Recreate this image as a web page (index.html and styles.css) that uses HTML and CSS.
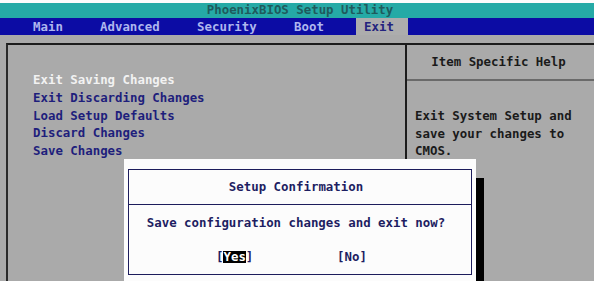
FILE: index.html
```html
<!DOCTYPE html>
<html lang="en">
<head>
<meta charset="UTF-8">
<meta name="viewport" content="width=device-width, initial-scale=1.0">
<title>PhoenixBIOS Setup Utility</title>
<link rel="stylesheet" href="styles.css">
</head>
<body>
<div class="screen">
  <div class="topgap"></div>
  <div class="titlebar">PhoenixBIOS Setup Utility</div>
  <div class="menubar">
    <span class="tab tab-main">Main</span>
    <span class="tab tab-adv">Advanced</span>
    <span class="tab tab-sec">Security</span>
    <span class="tab tab-boot">Boot</span>
    <span class="tab tab-exit">Exit</span>
  </div>
  <div class="frame">
    <ul class="items">
      <li class="current">Exit Saving Changes</li>
      <li>Exit Discarding Changes</li>
      <li>Load Setup Defaults</li>
      <li>Discard Changes</li>
      <li>Save Changes</li>
    </ul>
    <div class="help">
      <div class="help-title">Item Specific Help</div>
      <div class="help-text">Exit System Setup and<br>save your changes to<br>CMOS.</div>
    </div>
  </div>

  <!-- confirmation popup over the menu -->
  <div class="dialog">
    <div class="dialog-inner">
      <div class="dialog-title">Setup Confirmation</div>
      <div class="dialog-body">
        <p class="question">Save configuration changes and exit now?</p>
        <div class="choices">
          <span class="choice">[<span class="sel">Yes</span>]</span>
          <span class="choice">[No]</span>
        </div>
      </div>
    </div>
  </div>
</div>
</body>
</html>
```

FILE: styles.css
```css
body {
  margin: 0;
  padding: 0;
  background-color: #aaaaaa;
  font-family: "DejaVu Sans Mono", "Liberation Mono", monospace;
  font-size: 12.4px;
  font-weight: bold;
}
.screen {
  position: relative;
  width: 594px;
  height: 281px;
  overflow: hidden;
  background-color: #aaaaaa;
}
.topgap {
  height: 3px;
  background: #fbfbfb;
}
.titlebar {
  height: 15px;
  line-height: 14px;
  background-color: #25aaa6;
  color: #1f5a5c;
  text-align: center;
  padding-left: 6px;
}
.menubar {
  display: flex;
  height: 17px;
  background-color: #0c0ca4;
}
.tab {
  line-height: 17px;
  color: #aeb6ee;
}
.tab-main {
  margin-left: 33px;
  width: 67px;
}
.tab-adv,
.tab-sec {
  width: 97px;
}
.tab-boot {
  width: 62px;
}
.tab-exit {
  width: 44px;
  padding-left: 8px;
  background-color: #adadad;
  color: #23237e;
}
.frame {
  display: flex;
  margin: 8px 0 0 6px;
  height: 240px;
  border-top: 2px solid #1c1c1c;
  border-left: 2px solid #2a2a2a;
}
.items {
  list-style: none;
  margin: 0;
  padding: 26px 0 0 25px;
  width: 372px;
}
.items li {
  line-height: 17.8px;
  color: #1e1e7c;
}
.items li.current {
  color: #f2f2f2;
}
.help {
  flex: 1;
  border-left: 2px solid #1c1c1c;
  color: #1a1a1a;
}
.help-title {
  height: 34px;
  line-height: 34px;
  text-align: center;
  padding-right: 4px;
  border-bottom: 2px solid #6a6a6a;
}
.help-text {
  padding: 26px 0 0 8px;
  line-height: 17.5px;
}
.dialog {
  position: absolute;
  left: 124px;
  top: 159px;
  width: 344px;
  height: 140px;
  padding: 10px 4px 0 4px;
  background: #fcfcfc;
  box-shadow: 8px 19px 0 #000;
  color: #1e1e62;
}
.dialog-inner {
  border: 1px solid #1c1c5c;
  height: 104px;
}
.dialog-title {
  height: 34px;
  line-height: 34px;
  text-align: center;
  padding-right: 8px;
  border-bottom: 1px solid #1c1c5c;
}
.dialog-body {
  padding-top: 9px;
}
.question {
  margin: 0;
  line-height: 18px;
  text-align: center;
  padding-right: 8px;
}
.choices {
  display: flex;
  margin-top: 16px;
  padding-left: 87px;
  line-height: 18px;
}
.choice {
  width: 121px;
}
.sel {
  display: inline-block;
  line-height: 12px;
  background: #000;
  color: #fff;
}
```
